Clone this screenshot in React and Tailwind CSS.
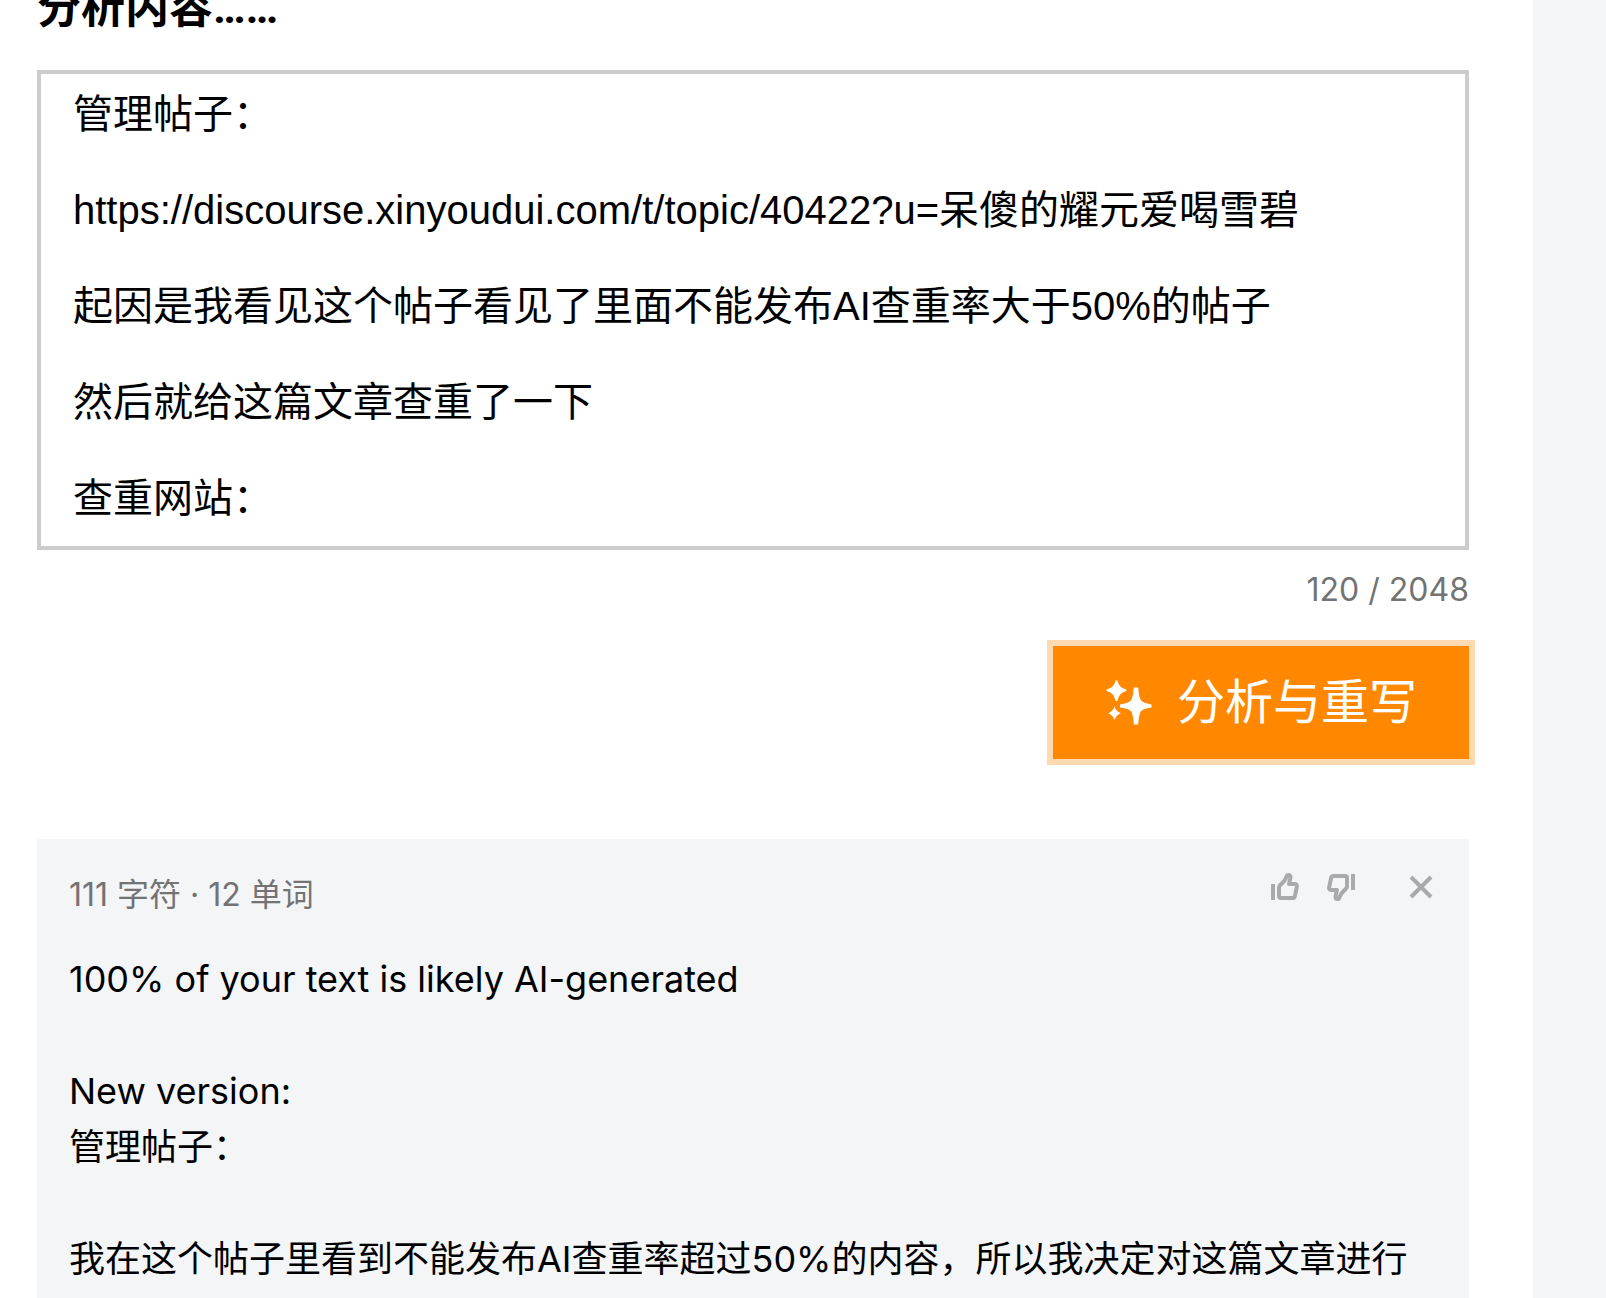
import { useState } from 'react';

const POST = [
  '管理帖子：',
  'https://discourse.xinyoudui.com/t/topic/40422?u=呆傻的耀元爱喝雪碧',
  '起因是我看见这个帖子看见了里面不能发布AI查重率大于50%的帖子',
  '然后就给这篇文章查重了一下',
  '查重网站：',
].join('\n\n');

const MAX_LENGTH = 2048;

function SparklesIcon() {
  return (
    <svg width="48" height="48" viewBox="0 0 48 48" fill="currentColor" aria-hidden="true">
      <path d="M10.500 2.500h2c1.300 5 3 7.300 8.900 9v1.500c-5.900 1.800-7.600 4.500-8.900 10h-2c-1.300-5.500-3-8.200-8.900-10v-1.500c5.900-1.700 7.600-4 8.900-9z" />
      <path d="M28.800 9.500h4.400c.5 5.500 1 9.500 2.300 12 1.300 2.500 4.500 3.800 11 5v3c-6.500 1.200-9.700 2-11 4.500-1.300 2.500-1.800 6.700-2.300 12.500h-4.400c-.5-5.800-1-10-2.300-12.500-1.300-2.500-4.500-3.300-11.500-4.500v-3c7-1.200 10.200-2.500 11.500-5 1.300-2.500 1.800-6.500 2.300-12z" />
      <path d="M9.500 28.500c1.200 3.500 2.800 5 6.300 6.700-3.500 1.800-5.100 3.300-6.300 6.800-1.200-3.500-2.800-5-6.300-6.800 3.500-1.700 5.100-3.200 6.300-6.700z" />
    </svg>
  );
}

function ThumbIcon({ down }) {
  return (
    <svg width="28" height="28" viewBox="0 0 28 28" className={down ? 'rotate-180' : ''} aria-hidden="true">
      <path d="M0 11h4v16H0z" fill="currentColor" />
      <path
        d="M8 14.500v8.500q0 2 2 2h11.500q2 0 2.400-2l2-9.500q.3-2.500-2-2.500h-5.900l1.500-6.500q0-2.500-2-2.500-1.500 0-2.200 2-.8 2.800-3 5l-3 3q-1.300 1.300-1.300 2.500z"
        fill="none"
        stroke="currentColor"
        strokeWidth="4"
        strokeLinejoin="round"
      />
    </svg>
  );
}

function CloseIcon() {
  return (
    <svg width="24" height="24" viewBox="0 0 24 24" stroke="currentColor" strokeWidth="4" aria-hidden="true">
      <path d="M2 2l20 20M22 2L2 22" />
    </svg>
  );
}

export default function App() {
  const [text, setText] = useState(POST);
  const [showResult, setShowResult] = useState(true);

  return (
    <div className="flex h-screen overflow-hidden bg-white font-[Inter,'Noto_Sans_CJK_SC',sans-serif] text-black">
      <main className="-mt-4 flex min-w-0 flex-1 flex-col pl-[37px] pr-16">
        <label
          htmlFor="source"
          className="font-[Roboto,'Noto_Sans_CJK_SC',sans-serif] text-[44px] font-bold leading-[48px]"
        >
          分析内容……
        </label>

        <textarea
          id="source"
          rows={9}
          maxLength={MAX_LENGTH}
          value={text}
          onChange={(e) => setText(e.target.value)}
          className="mt-[38px] w-full shrink-0 resize-none overflow-hidden border-4 border-[#cccccc] px-8 pt-4 pb-6 font-['Liberation_Sans','Noto_Sans_CJK_SC',sans-serif] text-[40px] leading-[48px] outline-none"
        />

        <div className="mt-5 text-right text-[32px] leading-[40px] text-[#737373]">120 / {MAX_LENGTH}</div>

        <button
          type="button"
          onClick={() => setShowResult(true)}
          className="mt-9 flex items-center gap-6 self-end bg-[#ff8800] px-[52px] pt-8 pb-[33px] text-[48px] leading-[48px] text-white ring-6 ring-[#ffd9b0]"
        >
          <SparklesIcon />
          分析与重写
        </button>

        {showResult && (
          <section className="mt-20 flex-1 bg-[#f3f5f7] px-8 pt-8">
            <div className="flex items-start justify-between">
              <p className="text-[32px] leading-[48px] text-[#737373]">111 字符 · 12 单词</p>
              <div className="flex items-center pt-0.5 pr-1 text-[#a9aaab]">
                <button type="button" aria-label="Like">
                  <ThumbIcon />
                </button>
                <button type="button" aria-label="Dislike" className="ml-7">
                  <ThumbIcon down />
                </button>
                <button type="button" aria-label="Close" className="ml-[54px]" onClick={() => setShowResult(false)}>
                  <CloseIcon />
                </button>
              </div>
            </div>

            <div className="mt-8 whitespace-nowrap text-[36px] leading-[56px]">
              <p>100% of your text is likely AI-generated</p>
              <br />
              <p>New version:</p>
              <p>管理帖子：</p>
              <br />
              <p>我在这个帖子里看到不能发布AI查重率超过50%的内容，所以我决定对这篇文章进行</p>
            </div>
          </section>
        )}
      </main>

      <aside className="w-[73px] shrink-0 bg-[#f3f5f7]" />
    </div>
  );
}
